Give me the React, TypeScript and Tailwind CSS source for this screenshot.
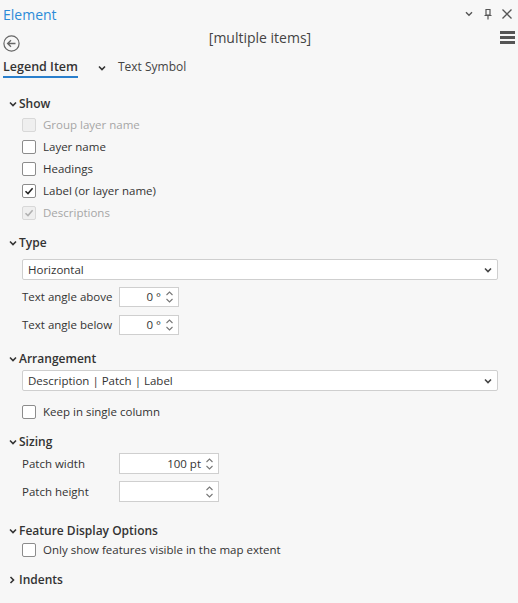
import { ReactNode } from 'react'

const font = { fontFamily: '"Open Sans", "Noto Sans", sans-serif' }

function ChevronDown({ className = '' }: { className?: string }) {
  return (
    <svg width="8" height="6" viewBox="0 0 8 6" className={className}>
      <path d="M1 1.5 L4 4.5 L7 1.5" fill="none" stroke="currentColor" strokeWidth="1.6" />
    </svg>
  )
}

function ChevronRight() {
  return (
    <svg width="6" height="8" viewBox="0 0 6 8">
      <path d="M1.5 1 L4.5 4 L1.5 7" fill="none" stroke="currentColor" strokeWidth="1.6" />
    </svg>
  )
}

function SectionHeader({ title, open = true }: { title: string; open?: boolean }) {
  return (
    <div className="flex items-center h-[20px] pl-[9px] text-[#333]">
      <span className="w-[10px] flex items-center">{open ? <ChevronDown /> : <ChevronRight />}</span>
      <span className="text-[12px] font-semibold">{title}</span>
    </div>
  )
}

function Checkbox({ label, checked = false, disabled = false }: { label: string; checked?: boolean; disabled?: boolean }) {
  return (
    <div className="flex items-center h-[22px] pl-[22px]">
      <span
        className={`w-[14px] h-[14px] rounded-[2px] border flex items-center justify-center ${
          disabled ? 'border-[#d8d8d8] bg-[#efefef]' : 'border-[#8c8c8c] bg-white'
        }`}
      >
        {checked && (
          <svg width="10" height="10" viewBox="0 0 10 10">
            <path
              d="M1.5 5.2 L4 7.6 L8.6 2.2"
              fill="none"
              stroke={disabled ? '#b0b0b0' : '#222'}
              strokeWidth="1.5"
            />
          </svg>
        )}
      </span>
      <span className={`ml-[7px] text-[11.5px] ${disabled ? 'text-[#a6a6a6]' : 'text-[#333]'}`}>{label}</span>
    </div>
  )
}

function Dropdown({ value }: { value: string }) {
  return (
    <div className="ml-[22px] w-[476px] h-[21px] bg-white border border-[#cfcfcf] rounded-[2px] flex items-center justify-between pl-[5px] pr-[5px]">
      <span className="text-[11.5px] text-[#333]">{value}</span>
      <ChevronDown className="text-[#444]" />
    </div>
  )
}

function Spinner() {
  return (
    <svg width="9" height="14" viewBox="0 0 9 14" className="text-[#777]">
      <path d="M1.5 5 L4.5 2 L7.5 5" fill="none" stroke="currentColor" strokeWidth="1.1" />
      <path d="M1.5 9 L4.5 12 L7.5 9" fill="none" stroke="currentColor" strokeWidth="1.1" />
    </svg>
  )
}

function SpinRow({ label, value, width, height = 'h-[20px]' }: { label: string; value: string; width: string; height?: string }) {
  return (
    <div className="flex items-center pl-[22px]">
      <span className="w-[97px] text-[11.5px] text-[#333]">{label}</span>
      <div className={`${width} ${height} bg-white border border-[#cfcfcf] flex items-center justify-end pr-[4px]`}>
        <span className="text-[11.5px] text-[#333] mr-[4px]">{value}</span>
        <Spinner />
      </div>
    </div>
  )
}

function Section({ children, className = '' }: { children: ReactNode; className?: string }) {
  return <div className={className}>{children}</div>
}

export default function App() {
  return (
    <div className="w-[518px] h-[603px] bg-[#f7f7f7] overflow-hidden" style={font}>
      {/* title bar */}
      <div className="flex items-center justify-between h-[28px] pl-[3px] pr-[6px]">
        <span className="text-[14px] text-[#2b8bd8]">Element</span>
        <div className="flex items-center text-[#555]">
          <svg width="8" height="6" viewBox="0 0 8 6" className="mr-[11px]">
            <path d="M1 1.2 L4 4.2 L7 1.2" fill="none" stroke="currentColor" strokeWidth="1.4" />
          </svg>
          <svg width="8" height="11" viewBox="0 0 8 11" className="mr-[10px]">
            <path d="M2 0.5 H6 V6 H2 Z M0.5 6.5 H7.5 M4 6.5 V10.5" fill="none" stroke="currentColor" strokeWidth="1.2" />
          </svg>
          <svg width="10" height="10" viewBox="0 0 10 10">
            <path d="M0.5 0.5 L9.5 9.5 M9.5 0.5 L0.5 9.5" fill="none" stroke="currentColor" strokeWidth="1.3" />
          </svg>
        </div>
      </div>

      {/* header row */}
      <div className="flex items-start justify-between h-[26px] pl-[3px] pr-[3px]">
        <svg width="17" height="17" viewBox="0 0 17 17" className="mt-[7px] text-[#666]">
          <circle cx="8.5" cy="8.5" r="7.6" fill="none" stroke="currentColor" strokeWidth="1.2" />
          <path d="M12.5 8.5 H4.8 M8 5.2 L4.6 8.5 L8 11.8" fill="none" stroke="currentColor" strokeWidth="1.3" />
        </svg>
        <span className="-mt-[1px] text-[14px] text-[#444]">[multiple items]</span>
        <svg width="15" height="13" viewBox="0 0 15 13" className="mt-[3px] text-[#555]">
          <rect x="0" y="0" width="15" height="3" fill="currentColor" />
          <rect x="0" y="5" width="15" height="3" fill="currentColor" />
          <rect x="0" y="10" width="15" height="3" fill="currentColor" />
        </svg>
      </div>

      {/* tabs */}
      <div className="flex items-end h-[24px] pl-[3px]">
        <span className="text-[12.5px] font-semibold text-[#333] border-b-2 border-[#2a7fcc] leading-[18px]">
          Legend Item
        </span>
        <span className="ml-[20px] mb-[7px] text-[#333]">
          <ChevronDown />
        </span>
        <span className="ml-[12px] pb-[2px] text-[12px] text-[#444] leading-[18px]">Text Symbol</span>
      </div>

      <Section className="mt-[16px]">
        <SectionHeader title="Show" />
        <Checkbox label="Group layer name" disabled />
        <Checkbox label="Layer name" />
        <Checkbox label="Headings" />
        <Checkbox label="Label (or layer name)" checked />
        <Checkbox label="Descriptions" checked disabled />
      </Section>

      <Section className="mt-[9px]">
        <SectionHeader title="Type" />
        <div className="mt-[6px]">
          <Dropdown value="Horizontal" />
        </div>
        <div className="mt-[7px]">
          <SpinRow label="Text angle above" value="0 °" width="w-[60px]" />
        </div>
        <div className="mt-[8px]">
          <SpinRow label="Text angle below" value="0 °" width="w-[60px]" />
        </div>
      </Section>

      <Section className="mt-[14px]">
        <SectionHeader title="Arrangement" />
        <div className="mt-[1px]">
          <Dropdown value="Description | Patch | Label" />
        </div>
        <div className="mt-[10px]">
          <Checkbox label="Keep in single column" />
        </div>
      </Section>

      <Section className="mt-[9px]">
        <SectionHeader title="Sizing" />
        <div className="mt-[1px]">
          <SpinRow label="Patch width" value="100 pt" width="w-[100px]" height="h-[21px]" />
        </div>
        <div className="mt-[7px]">
          <SpinRow label="Patch height" value="" width="w-[100px]" height="h-[21px]" />
        </div>
      </Section>

      <Section className="mt-[19px]">
        <div className="h-[18px]">
          <SectionHeader title="Feature Display Options" />
        </div>
        <Checkbox label="Only show features visible in the map extent" />
      </Section>

      <Section className="mt-[9px]">
        <SectionHeader title="Indents" open={false} />
      </Section>
    </div>
  )
}
